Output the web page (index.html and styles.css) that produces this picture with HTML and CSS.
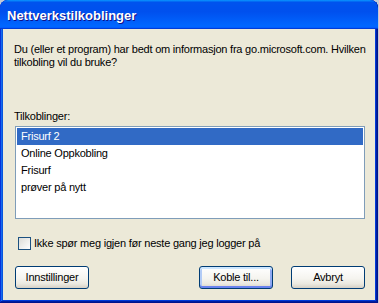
FILE: index.html
```html
<!DOCTYPE html>
<html>
<head>
<meta charset="utf-8" />
<title>Nettverkstilkoblinger</title>
<link rel="stylesheet" href="styles.css">
</head>

<body>
<!-- Fenêtre de dialogue -->
<div class="window">
    <div class="title_bar">
        <span class="title">Nettverkstilkoblinger</span>
    </div>
    <div class="client">
        <p class="message">Du (eller et program) har bedt om informasjon fra go.microsoft.com. Hvilken<br>tilkobling vil du bruke?</p>
        <div class="label">Tilkoblinger:</div>
        <ul class="liste">
            <li class="selected">Frisurf 2</li>
            <li>Online Oppkobling</li>
            <li>Frisurf</li>
            <li>prøver på nytt</li>
        </ul>
        <div class="check_row">
            <span class="check_box"></span>
            <span>Ikke spør meg igjen før neste gang jeg logger på</span>
        </div>
        <div class="buttons">
            <div class="button">Innstillinger</div>
            <div class="spacer"></div>
            <div class="button default">Koble til...</div>
            <div class="button">Avbryt</div>
        </div>
    </div>
</div>
</body>

</html>
```

FILE: styles.css
```css
body {
    margin: 0;
    padding: 0;
    background: #c3cad6;
    font-family: "Liberation Sans", Arial, sans-serif;
    font-size: 11px;
    color: black;
}

.window {
    box-sizing: border-box;
    width: 378px;
    height: 303px;
    display: flex;
    flex-direction: column;
    background: #0831d9;
    border-radius: 8px 8px 0 0;
    box-shadow: inset -1px -1px #00138c, inset 1px 1px #0831d9,
                inset -2px -2px #001ea0, inset 2px 2px #166aee,
                inset -3px -3px #003bda, inset 3px 3px #0855dd;
    overflow: hidden;
}

.title_bar {
    box-sizing: border-box;
    height: 29px;
    padding: 3px 0 0 7px;
    line-height: 26px;
    border-radius: 8px 8px 0 0;
    background: linear-gradient(180deg, #0997ff, #0053ee 8%, #0050ee 40%, #06f 88%, #06f 93%, #005bff 95%, #003dd7 96%, #003dd7);
}

.title {
    color: white;
    font-weight: bold;
    font-size: 13px;
    text-shadow: 1px 1px #0f1089;
}

.client {
    flex: 1;
    margin: 0 3px 3px 3px;
    padding: 14px 10px 0 11px;
    background: #ece9d8;
    letter-spacing: -0.22px;
}

.message {
    margin: 0;
    line-height: 13px;
    white-space: nowrap;
}

.label {
    margin-top: 41px;
    line-height: 13px;
}

.liste {
    box-sizing: border-box;
    list-style: none;
    margin: 3px 0 0 1px;
    padding: 1px;
    height: 93px;
    background: white;
    border: 1px solid #7f9db9;
}

.liste li {
    height: 17px;
    line-height: 17px;
    padding-left: 4px;
}

.liste li.selected {
    background: #316ac5;
    color: white;
}

.check_row {
    display: flex;
    align-items: center;
    gap: 3px;
    margin: 18px 0 0 4px;
    height: 13px;
    line-height: 13px;
}

.check_box {
    box-sizing: border-box;
    width: 13px;
    height: 13px;
    border: 1px solid #1c5180;
    background: linear-gradient(135deg, #dcdcd7, #ffffff);
}

.buttons {
    display: flex;
    gap: 18px;
    margin: 16px 0 0 1px;
}

.spacer {
    flex: 1;
}

.button {
    box-sizing: border-box;
    width: 74px;
    height: 23px;
    line-height: 21px;
    text-align: center;
    border: 1px solid #003c74;
    border-radius: 3px;
    background: linear-gradient(180deg, #ffffff 0%, #f5f4ef 55%, #ebe9e0 80%, #d6d0c5 100%);
}

.button.default {
    box-shadow: inset 0 2px #cee7ff, inset 0 -2px #6982ee, inset 2px 0 #b2cbf6, inset -2px 0 #8fa9f2;
}
```
